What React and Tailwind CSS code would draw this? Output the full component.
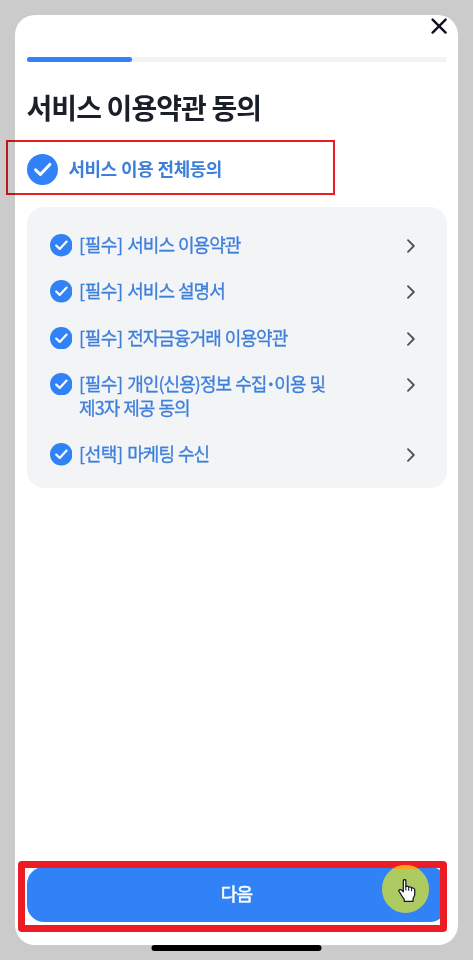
const FONT = "font-['Noto_Sans_CJK_KR','Noto_Sans',sans-serif]";

const TERMS = [
  { tag: '[필수]', lines: ['서비스 이용약관'] },
  { tag: '[필수]', lines: ['서비스 설명서'] },
  { tag: '[필수]', lines: ['전자금융거래 이용약관'] },
  { tag: '[필수]', lines: ['개인(신용)정보 수집·이용 및', '제3자 제공 동의'] },
  { tag: '[선택]', lines: ['마케팅 수신'] },
];

function CheckCircle({ className }) {
  return (
    <svg viewBox="0 0 32 32" fill="none" className={className}>
      <circle cx="16" cy="16" r="16" fill="#3182f6" />
      <path d="M8.8 16.4L13.8 21.2L23.6 10.8" stroke="#fff" strokeWidth="3.1" strokeLinecap="round" strokeLinejoin="round" />
    </svg>
  );
}

function Chevron() {
  return (
    <svg viewBox="0 0 8 14" fill="none" className="mt-[6px] h-[14px] w-2 shrink-0">
      <path d="M1 1.2L6.8 7L1 12.8" stroke="#4b515b" strokeWidth="1.8" strokeLinecap="round" strokeLinejoin="round" />
    </svg>
  );
}

function TermRow({ tag, lines }) {
  return (
    <li className="flex items-start">
      <CheckCircle className="mt-[1px] h-[22.5px] w-[22.5px] shrink-0" />
      <p className="-mt-px mb-px ml-[7px] flex-1 text-[18px] leading-6 tracking-[-0.93px] whitespace-nowrap text-[#3f7fdc] [-webkit-text-stroke:0.3px_#3f7fdc] [word-spacing:0.8px]">
        {lines.map((line, i) => (
          <span key={line} className="block">
            {i === 0 && <span className="tracking-[-0.4px]">{tag} </span>}
            {line.split('·').map((part, n) => (
              <span key={part}>
                {n > 0 && <span className="-mx-[0.9px] font-bold">·</span>}
                {part}
              </span>
            ))}
          </span>
        ))}
      </p>
      <Chevron />
    </li>
  );
}

function HandCursor() {
  return (
    <svg viewBox="0 0 17 22" className="h-[23px] w-[18px]">
      <path
        d="M5 1.6C5 .2 7.4 .2 7.4 1.6V7.4C8 6.4 9.9 6.7 10.1 8C10.9 7.1 12.7 7.5 12.9 8.9C14 8.2 15.9 8.8 15.9 10.5V14.5C15.9 16.4 14.5 17.6 14.3 19V21.3H5.8V19.2C4.4 17.4 3 15.6 2.2 13.8C1.4 12.7 .4 11.9 .7 10.9C1.3 9.6 3.2 10 5 12.2Z"
        fill="#fff"
        stroke="#111827"
        strokeWidth="1.2"
        strokeLinejoin="round"
      />
      <path d="M7.4 7V11M10.1 8V11.2M12.9 9V11.8" stroke="#111827" strokeWidth="1" />
    </svg>
  );
}

export default function App() {
  return (
    <div className={`relative flex h-[960px] w-[473px] flex-col items-center bg-[#cbcbcb] pt-[15px] ${FONT}`}>
      <main className="flex h-[930px] w-[443px] flex-col rounded-[20px] bg-white pr-[11.5px] pl-[11.5px]">
        <header className="flex h-[42px] justify-end pt-[3px]">
          <button aria-label="닫기" className="h-4 w-4">
            <svg viewBox="0 0 16 16" fill="none" className="h-4 w-4">
              <path d="M1.6 1.6L14.6 14.6M14.6 1.6L1.6 14.6" stroke="#110f24" strokeWidth="2.4" strokeLinecap="round" />
            </svg>
          </button>
        </header>
        <div className="h-[5px] shrink-0 rounded-full bg-[#f2f3f5]">
          <div className="h-full w-[105px] rounded-full bg-[#3182f6]" />
        </div>
        <h1 className="mt-[25px] text-[28px] leading-10 font-bold tracking-[-0.9px] whitespace-nowrap text-[#1b1f29]">서비스 이용약관 동의</h1>
        <div className="mt-[27px] flex h-[31px] items-center">
          <CheckCircle className="h-[31px] w-[31px] shrink-0" />
          <span className="-mt-[3px] ml-[11px] text-[18px] leading-6 font-bold tracking-[-0.5px] whitespace-nowrap text-[#3f7fdc] [word-spacing:0.8px]">서비스 이용 전체동의</span>
        </div>
        <ul className="mt-[22px] flex h-[281px] flex-col gap-[22.3px] rounded-[17px] bg-[#f2f4f6] pt-[26px] pr-[31.5px] pl-[23px]">
          {TERMS.map((term) => (
            <TermRow key={term.lines[0]} tag={term.tag} lines={term.lines} />
          ))}
        </ul>
        <button className="mt-auto mb-[23px] h-[55px] shrink-0 rounded-[17px] bg-[#3182f6] pb-[4px] text-[18px] leading-6 tracking-[-0.7px] text-white [-webkit-text-stroke:0.5px_#fff]">다음</button>
      </main>
      <div className="h-[6px] w-[170px] -translate-x-[0.5px] rounded-full bg-black" />

      <div className="absolute top-[140px] left-[6px] h-[55px] w-[329px] border-2 border-[#ed1c24] mix-blend-multiply" />
      <div className="absolute top-[861px] left-[18px] h-[71px] w-[429px] rounded-[4px] border-7 border-[#ed1c24]" />
      <div className="absolute top-[865px] left-[382px] h-12 w-[47px] overflow-hidden rounded-full bg-[#aecb62]">
        <div className="h-[4px] bg-[#f9a11b]" />
        <div className="absolute top-[14px] left-[15.5px]">
          <HandCursor />
        </div>
      </div>
    </div>
  );
}
